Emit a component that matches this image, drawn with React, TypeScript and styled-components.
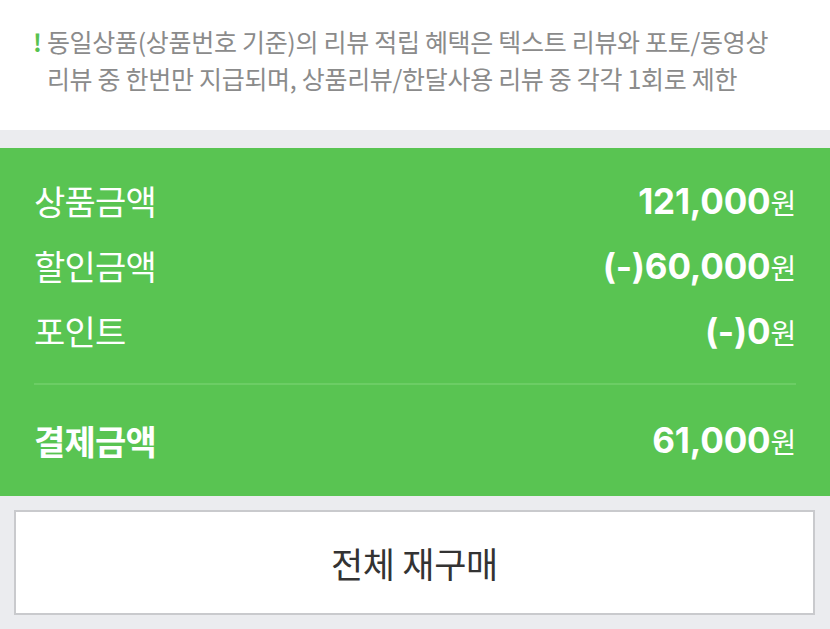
import React from "react";
import styled, { createGlobalStyle } from "styled-components";

const GlobalStyle = createGlobalStyle`
  html, body {
    margin: 0;
    padding: 0;
    background: #ebecef;
    font-family: "Noto Sans CJK KR", "Noto Sans", sans-serif;
  }
`;

interface IRow {
  label: string;
  value: string;
}

const rows: IRow[] = [
  { label: "상품금액", value: "121,000" },
  { label: "할인금액", value: "(-)60,000" },
  { label: "포인트", value: "(-)0" },
];

function App() {
  return (
    <Page>
      <GlobalStyle />
      <Notice>
        <Mark>!</Mark>
        <NoticeText>
          동일상품(상품번호 기준)의 리뷰 적립 혜택은 텍스트 리뷰와 포토/동영상
          <br />
          리뷰 중 한번만 지급되며, 상품리뷰/한달사용 리뷰 중 각각 1회로 제한
        </NoticeText>
      </Notice>
      <Summary>
        <List>
          {rows.map((row) => (
            <Row key={row.label}>
              <Label>{row.label}</Label>
              <Amount>
                {row.value}
                <Unit>원</Unit>
              </Amount>
            </Row>
          ))}
        </List>
        <Total>
          <Label $bold>결제금액</Label>
          <Amount>
            61,000
            <Unit>원</Unit>
          </Amount>
        </Total>
      </Summary>
      <Actions>
        <Button type="button">전체 재구매</Button>
      </Actions>
    </Page>
  );
}

export default App;

const Page = styled.div`
  width: 830px;
  height: 629px;
  background: #ebecef;
  overflow: hidden;
`;

const Notice = styled.div`
  display: flex;
  align-items: flex-start;
  gap: 5px;
  height: 130px;
  box-sizing: border-box;
  padding: 23px 0 0 33px;
  background: #fff;
  margin-bottom: 18px;
`;

const Mark = styled.span`
  font-size: 24px;
  line-height: 37px;
  font-weight: 700;
  color: #58c24f;
`;

const NoticeText = styled.p`
  margin: 0;
  font-size: 25px;
  line-height: 37px;
  letter-spacing: -0.3px;
  color: #8b8b8b;
`;

const Summary = styled.section`
  background: #59c452;
  padding: 20px 34px 0;
  height: 348px;
  box-sizing: border-box;
`;

const List = styled.div`
  display: flex;
  flex-direction: column;
  padding-bottom: 20px;
  border-bottom: 2px solid #6ccd65;
`;

const Row = styled.div`
  display: flex;
  justify-content: space-between;
  align-items: center;
  height: 65px;
  color: #fff;
`;

const Total = styled(Row)`
  height: 110px;
`;

const Label = styled.span<{ $bold?: boolean }>`
  font-size: 34px;
  font-weight: ${(p) => (p.$bold ? 700 : 400)};
  letter-spacing: -0.8px;
`;

const Amount = styled.span`
  display: flex;
  align-items: baseline;
  font-family: "Inter", "Noto Sans CJK KR", sans-serif;
  font-size: 35px;
  font-weight: 700;
  letter-spacing: -0.2px;
`;

const Unit = styled.span`
  font-family: "Noto Sans CJK KR", sans-serif;
  font-size: 28px;
  font-weight: 400;
  margin-left: 0;
`;

const Actions = styled.div`
  padding: 14px 14px 0 14px;
`;

const Button = styled.button`
  display: flex;
  align-items: center;
  justify-content: center;
  width: 801px;
  height: 105px;
  background: #fff;
  border: 2px solid #c9cacd;
  font-family: "Noto Sans CJK KR", sans-serif;
  font-size: 35px;
  color: #333;
  letter-spacing: -0.3px;
`;
